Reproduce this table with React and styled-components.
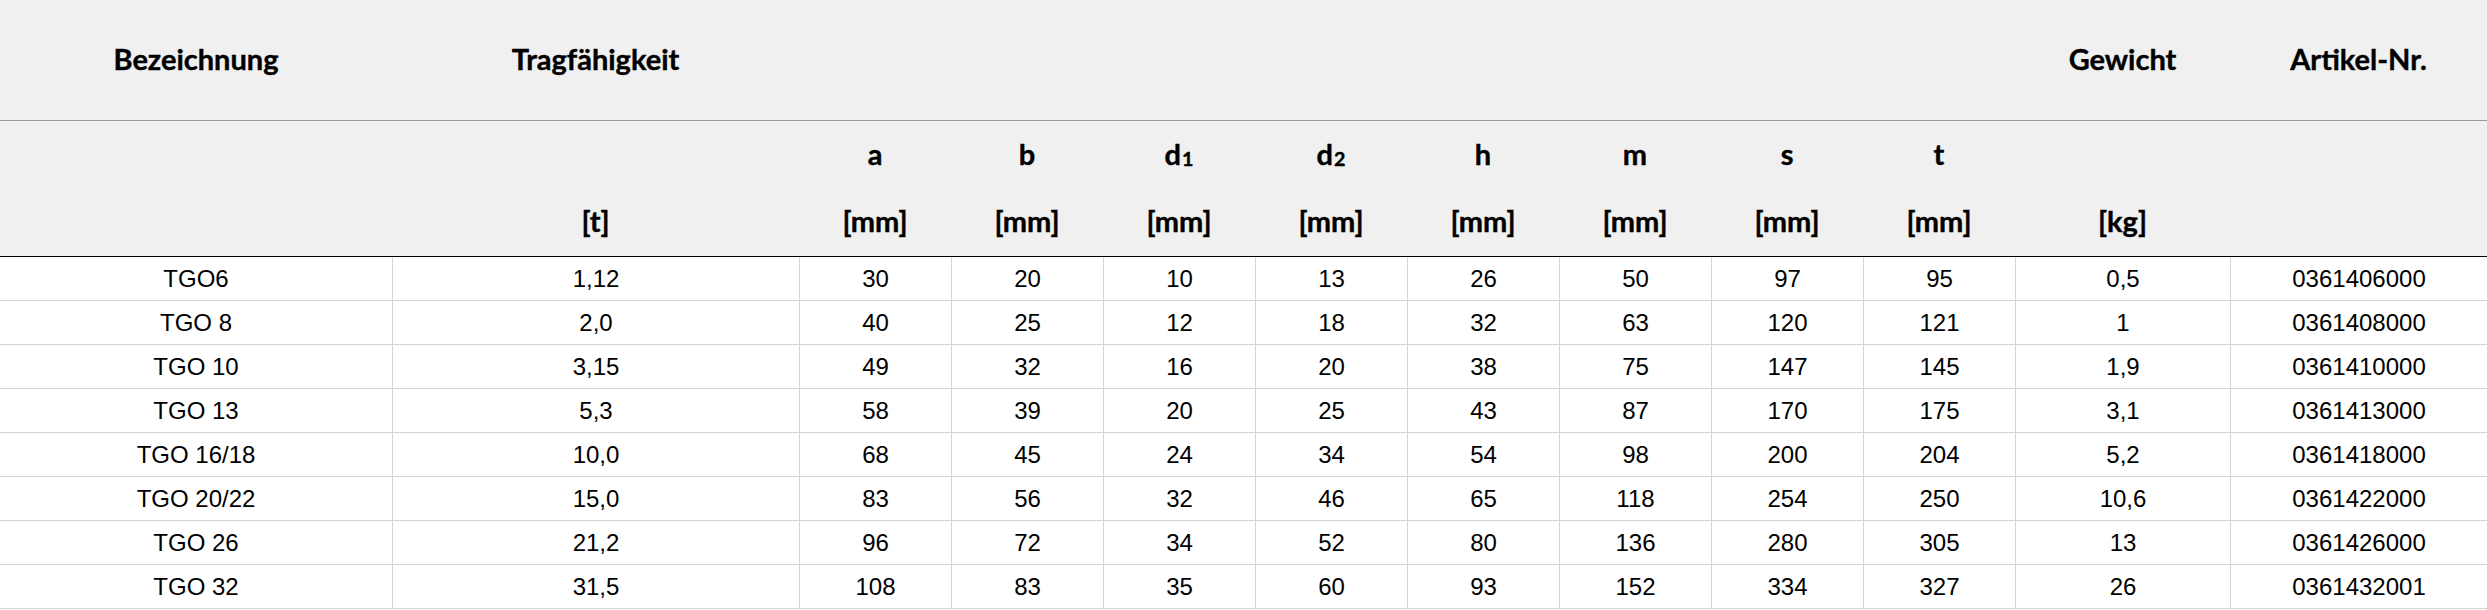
import React from 'react';
import styled, { createGlobalStyle } from 'styled-components';

const GlobalStyle = createGlobalStyle`
  html, body {
    margin: 0;
    padding: 0;
    background: #ffffff;
  }
`;

const COLUMNS = '392px 407px repeat(8, 152px) 215px 257px';

const rows = [
  ['TGO6', '1,12', '30', '20', '10', '13', '26', '50', '97', '95', '0,5', '0361406000'],
  ['TGO 8', '2,0', '40', '25', '12', '18', '32', '63', '120', '121', '1', '0361408000'],
  ['TGO 10', '3,15', '49', '32', '16', '20', '38', '75', '147', '145', '1,9', '0361410000'],
  ['TGO 13', '5,3', '58', '39', '20', '25', '43', '87', '170', '175', '3,1', '0361413000'],
  ['TGO 16/18', '10,0', '68', '45', '24', '34', '54', '98', '200', '204', '5,2', '0361418000'],
  ['TGO 20/22', '15,0', '83', '56', '32', '46', '65', '118', '254', '250', '10,6', '0361422000'],
  ['TGO 26', '21,2', '96', '72', '34', '52', '80', '136', '280', '305', '13', '0361426000'],
  ['TGO 32', '31,5', '108', '83', '35', '60', '93', '152', '334', '327', '26', '0361432001'],
];

const symbols = [
  ['a'],
  ['b'],
  ['d', '1'],
  ['d', '2'],
  ['h'],
  ['m'],
  ['s'],
  ['t'],
];

const App = () => {
  return (
    <>
      <GlobalStyle />
      <Table>
        <Head>
          <TitleRow>
            <HeadCell>Bezeichnung</HeadCell>
            <HeadCell>Tragfähigkeit</HeadCell>
            <HeadCell $span={8} />
            <HeadCell>Gewicht</HeadCell>
            <HeadCell>Artikel-Nr.</HeadCell>
          </TitleRow>
          <SymbolRow>
            <HeadCell />
            <HeadCell />
            {symbols.map(([letter, index], i) => (
              <HeadCell key={i}>
                {letter}
                {index && <Sub>{index}</Sub>}
              </HeadCell>
            ))}
            <HeadCell />
            <HeadCell />
          </SymbolRow>
          <UnitRow>
            <HeadCell />
            <HeadCell>[t]</HeadCell>
            {symbols.map((_, i) => (
              <HeadCell key={i}>[mm]</HeadCell>
            ))}
            <HeadCell>[kg]</HeadCell>
            <HeadCell />
          </UnitRow>
        </Head>
        {rows.map((row) => (
          <DataRow key={row[11]}>
            {row.map((value, i) => (
              <DataCell key={i}>{value}</DataCell>
            ))}
          </DataRow>
        ))}
      </Table>
    </>
  );
};

export default App;

const Table = styled.div`
  width: 2487px;
  display: flex;
  flex-direction: column;
`;

const Head = styled.div`
  background-color: #f0f0f0;
  font-family: Lato, 'Open Sans', sans-serif;
  font-weight: 700;
  font-size: 29px;
  color: #000;
  -webkit-text-stroke: 0.4px #000;
`;

const Row = styled.div`
  display: grid;
  grid-template-columns: ${COLUMNS};
  box-sizing: border-box;
`;

const TitleRow = styled(Row)`
  height: 121px;
  padding-bottom: 3px;
  border-bottom: 1px solid #9a9a9a;
`;

const SymbolRow = styled(Row)`
  height: 67px;
  padding-bottom: 3px;
`;

const UnitRow = styled(Row)`
  height: 69px;
  padding-bottom: 3px;
  border-bottom: 1px solid #000;
`;

const HeadCell = styled.div`
  display: flex;
  align-items: center;
  justify-content: center;
  line-height: 1;
  grid-column: span ${(p) => p.$span || 1};
`;

const Sub = styled.span`
  font-size: 0.68em;
  position: relative;
  top: 0.3em;
  margin-left: 1px;
`;

const DataRow = styled(Row)`
  height: 44px;
  border-bottom: 1px solid #d4d4d4;
`;

const DataCell = styled.div`
  display: flex;
  align-items: center;
  justify-content: center;
  font-family: 'Liberation Sans', Arial, sans-serif;
  font-size: 24px;
  color: #000;

  & + & {
    border-left: 1px solid #d4d4d4;
  }
`;
